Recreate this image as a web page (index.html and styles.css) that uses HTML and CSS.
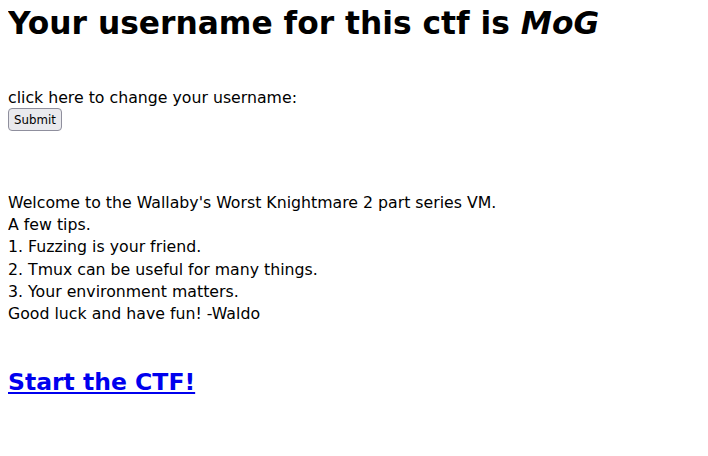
FILE: index.html
```html
<!DOCTYPE html>
<html>
<head>
<meta charset="utf-8">
<link rel="stylesheet" href="styles.css">
</head>
<body>
<h1 class="title">Your username for this ctf is <i>MoG</i></h1>
<form class="change">click here to change your username:<br><button class="submit" type="button">Submit</button></form>
<p class="tips">Welcome to the Wallaby's Worst Knightmare 2 part series VM.<br>A few tips.<br>1. Fuzzing is your friend.<br>2. Tmux can be useful for many things.<br>3. Your environment matters.<br>Good luck and have fun! -Waldo</p>
<h2 class="start"><a href="#">Start the CTF!</a></h2>
</body>
</html>
```
FILE: styles.css
```css
body {
  margin: 8px;
  font-family: "DejaVu Sans", sans-serif;
  font-size: 15.75px;
  color: #000;
  background: #fff;
}
.title {
  margin: -3px 0 0;
  font-size: 31.3px;
}
.change {
  margin: 47px 0 0;
}
.submit {
  margin-top: 1px;
  font-family: "DejaVu Sans", sans-serif;
  font-size: 11.8px;
  color: #000;
  background: #e9e9ed;
  border: 1px solid #8f8f9d;
  border-radius: 4px;
  padding: 2px 5px;
  height: 23px;
}
.tips {
  margin: 61px 0 0;
  line-height: 22.2px;
}
.start {
  margin: 43px 0 0;
  font-size: 23.5px;
}
.start a {
  color: #0000ee;
}
```
